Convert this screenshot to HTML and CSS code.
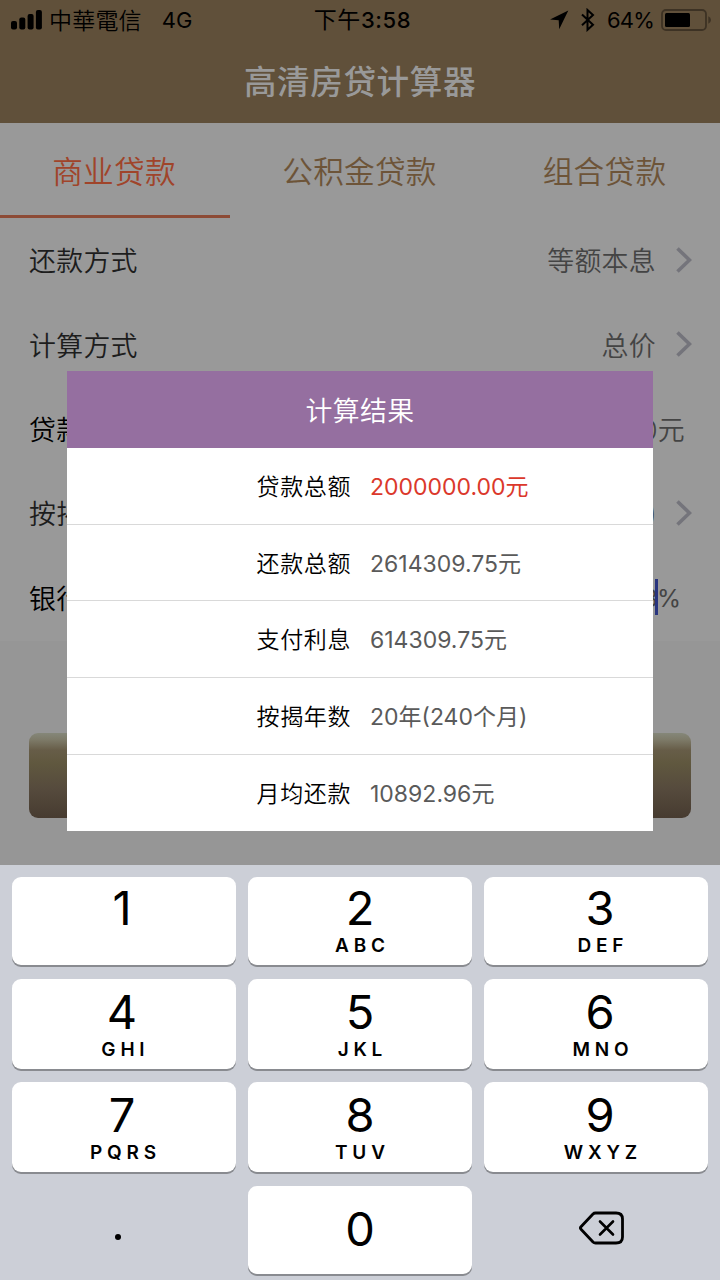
FILE: index.html
```html
<!DOCTYPE html>
<html lang="zh-Hans">
<head>
<meta charset="utf-8">
<title>高清房贷计算器</title>
<link rel="stylesheet" href="styles.css">
</head>
<body>
<div class="screen">
  <header class="header">
    <div class="status">
      <div class="status-left">
        <svg class="signal" width="32" height="20" viewBox="0 0 32 20"><rect x="0" y="11" width="6" height="8.5" rx="2"/><rect x="8.3" y="7.5" width="6" height="12" rx="2"/><rect x="16.6" y="4" width="6" height="15.5" rx="2"/><rect x="24.9" y="0" width="6" height="19.5" rx="2"/></svg>
        <span class="carrier" lang="zh-Hant">中華電信</span>
        <span class="network">4G</span>
      </div>
      <div class="clock"><span class="clock-period">下午</span>3:58</div>
      <div class="status-right">
        <svg class="location" width="19" height="20" viewBox="0 0 19 20"><path d="M18.3.5 9.2 19.3 8.7 10.2 0 9.4Z"/></svg>
        <svg class="bluetooth" width="14" height="24" viewBox="0 0 14 24"><path d="M1 6.5 12 16.7 6.5 21.8V2L12 7 1 17.3" fill="none" stroke="#000" stroke-width="2"/></svg>
        <span class="percent">64%</span>
        <svg class="battery" width="51" height="22" viewBox="0 0 51 22"><rect x="1" y="1" width="44" height="20" rx="4" fill="none" stroke="#3d3224" stroke-width="1.8"/><rect x="4" y="4" width="25" height="14" rx="1.5"/><path d="M47.3 7.3Q50 8.5 50 11T47.3 14.7Z" fill="#3d3224"/></svg>
      </div>
    </div>
    <h1 class="title">高清房贷计算器</h1>
  </header>

  <nav class="tabs">
    <div class="tab tab-active">商业贷款</div>
    <div class="tab">公积金贷款</div>
    <div class="tab">组合贷款</div>
  </nav>

  <main class="form">
    <div class="field"><span>还款方式</span><span class="field-value">等额本息<svg class="chevron" width="16" height="26" viewBox="0 0 16 26"><path d="m1.5 1.5 12 11.5-12 11.5"/></svg></span></div>
    <div class="field"><span>计算方式</span><span class="field-value">总价<svg class="chevron" width="16" height="26" viewBox="0 0 16 26"><path d="m1.5 1.5 12 11.5-12 11.5"/></svg></span></div>
    <div class="field field-input"><span>贷款</span><span class="field-value value-amount">0元</span></div>
    <div class="field"><span>按揭</span><span class="field-value value-years">)<svg class="chevron" width="16" height="26" viewBox="0 0 16 26"><path d="m1.5 1.5 12 11.5-12 11.5"/></svg></span></div>
    <div class="field field-input"><span>银行</span><span class="field-value value-rate">3<i class="caret"></i>%</span></div>
  </main>

  <div class="action"><div class="button"></div></div>

  <div class="keyboard">
    <div class="key key-left"><b>1</b><small></small></div>
    <div class="key"><b>2</b><small>ABC</small></div>
    <div class="key key-right"><b>3</b><small>DEF</small></div>
    <div class="key key-tall key-left"><b>4</b><small>GHI</small></div>
    <div class="key key-tall"><b>5</b><small>JKL</small></div>
    <div class="key key-tall key-right"><b>6</b><small>MNO</small></div>
    <div class="key key-tall key-left"><b>7</b><small>PQRS</small></div>
    <div class="key key-tall"><b>8</b><small>TUV</small></div>
    <div class="key key-tall key-right"><b>9</b><small>WXYZ</small></div>
    <div class="key key-plain"><i class="dot"></i></div>
    <div class="key key-zero"><b>0</b></div>
    <div class="key key-plain"><svg class="delete" width="46" height="34" viewBox="0 0 46 34"><path d="M16.5 2H37Q43.5 2 43.5 8V26Q43.5 32 37 32H16.5Q15 32 14 31L2 18.3Q.8 17 2 15.7L14 3Q15 2 16.5 2Z"/><path d="m21 10.5 13 13M34 10.5l-13 13" stroke-width="2.6"/></svg></div>
  </div>

  <section class="dialog">
    <h2 class="dialog-title">计算结果</h2>
    <div class="result result-total"><span class="label">贷款总额</span><span class="value">2000000.00元</span></div>
    <div class="result"><span class="label">还款总额</span><span class="value">2614309.75元</span></div>
    <div class="result"><span class="label">支付利息</span><span class="value">614309.75元</span></div>
    <div class="result"><span class="label">按揭年数</span><span class="value">20年(240个月)</span></div>
    <div class="result"><span class="label">月均还款</span><span class="value">10892.96元</span></div>
  </section>
</div>
</body>
</html>
```
FILE: styles.css
```css
* { box-sizing: border-box; }
body { margin: 0; }
.screen {
  position: relative;
  width: 720px;
  height: 1280px;
  overflow: hidden;
  display: flex;
  flex-direction: column;
  background: #969696;
  font-family: Inter, "Noto Sans CJK SC", sans-serif;
  font-weight: 350;
  color: #000;
  white-space: nowrap;
}
svg { display: block; flex: none; }

.header { height: 123px; background: #60503a; }
.status {
  height: 40px;
  display: grid;
  grid-template-columns: 1fr auto 1fr;
  align-items: center;
  padding: 0 8px 0 11px;
  font-size: 22px;
  line-height: 40px;
}
.status-left, .status-right { display: flex; align-items: center; }
.status-right { justify-content: flex-end; }
.carrier { margin-left: 6px; font-family: "Noto Sans CJK TC", sans-serif; font-size: 23px; letter-spacing: 0.2px; line-height: 38px; margin-bottom: 2px; }
.network { margin-left: 20px; font-weight: 400; }
.clock { font-weight: 500; letter-spacing: 0.6px; padding-left: 2px; }
.clock-period { font-size: 23px; font-weight: 400; }
.bluetooth { margin-left: 12px; }
.percent { margin: 0 7px 0 12px; font-weight: 400; letter-spacing: -0.8px; }
.title {
  margin: 19px 0 0;
  text-align: center;
  font-size: 32.6px;
  line-height: 46px;
  font-weight: 500;
  letter-spacing: 0.6px;
  color: #999;
}

.tabs {
  height: 95px;
  display: grid;
  grid-template-columns: 230px 260px 230px;
  grid-template-rows: 95px;
  background: #999;
  color: #6d5438;
  font-size: 30.7px;
  letter-spacing: 0.2px;
  text-align: center;
  line-height: 97px;
}
.tab { height: 95px; padding-right: 1px; }
.tab-active { color: #a0442a; border-bottom: 3px solid #8d4b36; padding-right: 2px; }

.form { height: 423px; background: #999; display: grid; grid-template-rows: repeat(5, 84.4px); }
.field {
  display: flex;
  justify-content: space-between;
  align-items: center;
  padding: 0 28px 1px 29px;
  font-size: 26.9px;
  letter-spacing: 0.3px;
  color: #1d1d1d;
}
.field-input { color: #000; }
.field-value { display: flex; align-items: center; color: #444; }
.chevron { margin-left: 20px; fill: none; stroke: #74747b; stroke-width: 3.6; }
.value-amount { margin-right: 7px; }
.value-years .chevron { margin-left: 19px; }
.value-rate { margin-right: 12px; padding-top: 2px; font-size: 24.5px; font-weight: 400; letter-spacing: -1px; }
.caret { width: 3px; height: 36px; margin: -3px -1px 0 -2px; background: #29357f; }

.action { height: 224px; padding: 92px 29px 0; }
.button {
  height: 85px;
  border-radius: 9px;
  background: linear-gradient(#858779 0%, #7d7a68 8%, #675d48 20%, #60583f 35%, #564b3d 65%, #473b30 100%);
}

.keyboard {
  height: 415px;
  padding: 12px 12px 0;
  background: #cccfd7;
  display: grid;
  grid-template-columns: repeat(3, 224px);
  grid-template-rows: 88px 90px 90px 88px;
  column-gap: 12px;
  row-gap: 13.5px;
}
.key {
  background: #fff;
  border-radius: 9px;
  box-shadow: 0 2px 0 #898b90;
  display: flex;
  flex-direction: column;
  align-items: center;
}
.key b { font-size: 47px; font-weight: 400; line-height: 58px; margin-top: 2px; }
.key small { font-size: 19px; font-weight: 600; line-height: 20px; letter-spacing: 4.8px; margin: -1px -4.8px 0 0; }
.key-tall b { margin-top: 4px; }
.key-left { padding-right: 2px; }
.key-left b { margin-right: 2px; }
.key-right { padding-left: 9px; }
.key-right b { margin-right: 1px; }
.key-plain { background: none; box-shadow: none; justify-content: center; }
.key-zero { justify-content: center; }
.key-zero b { margin: 0 0 2px; }
.dot { width: 6px; height: 6px; margin: 15px 13px 0 0; border-radius: 50%; background: #000; }
.delete { margin: 0 0 4px 11px; fill: none; stroke: #000; stroke-width: 2.8; stroke-linejoin: round; stroke-linecap: round; }

.dialog {
  position: absolute;
  left: 67px;
  top: 371px;
  width: 586px;
  height: 460px;
  background: #fff;
  display: grid;
  grid-template-rows: 77px 77px 76px 77px 77px 76px;
}
.dialog-title {
  margin: 0;
  background: #956fa0;
  color: #fff;
  text-align: center;
  font-size: 26.9px;
  font-weight: 350;
  letter-spacing: 0.4px;
  line-height: 80px;
  height: 77px;
}
.result {
  display: grid;
  grid-template-columns: 284px 1fr;
  column-gap: 19px;
  align-items: center;
  padding-bottom: 2px;
  border-bottom: 1px solid #d9d9d9;
  font-size: 23px;
}
.result:last-child { border-bottom: 0; }
.label { text-align: right; letter-spacing: 0.6px; }
.value { color: #5a5a5a; font-weight: 400; }
.result-total .value { color: #db382b; }
```
